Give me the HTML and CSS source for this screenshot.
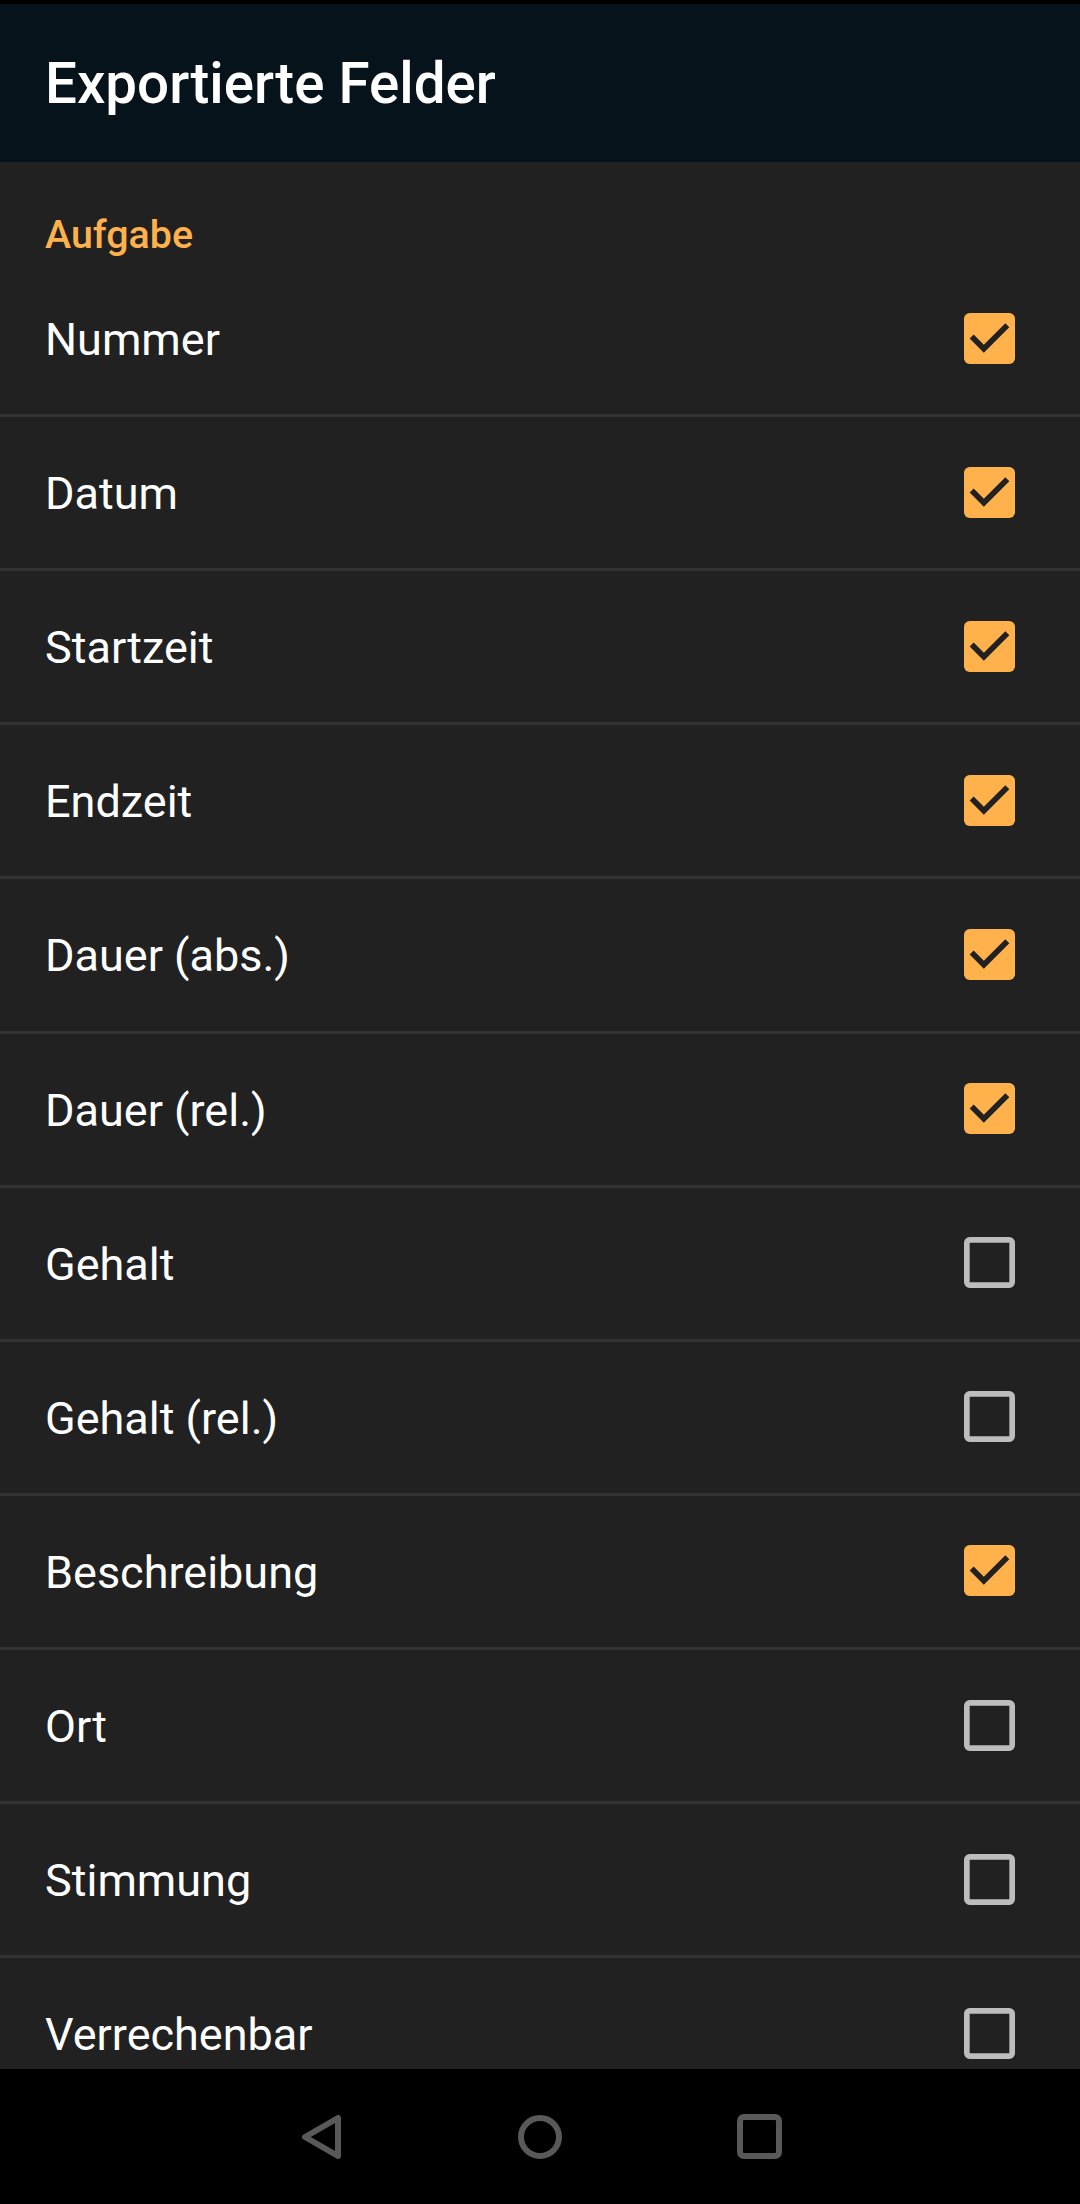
FILE: index.html
```html
<!DOCTYPE html>
<html lang="de">
<head>
<meta charset="utf-8">
<title>Exportierte Felder</title>
<link rel="stylesheet" href="styles.css">
</head>
<body>
<div class="screen">
  <div class="statusbar"></div>
  <header class="appbar"><h1 class="title">Exportierte Felder</h1></header>
  <main class="list">
    <div class="category">Aufgabe</div>

    <div class="row"><span class="label">Nummer</span>
      <svg class="cb" viewBox="0 0 18 18"><rect class="on" x="0" y="0" width="18" height="18" rx="2"/><path class="tick" d="M7 14 l-5-5 1.41-1.41 L7 11.17 l7.59-7.59 L16 5 z"/></svg></div>
    <div class="row"><span class="label">Datum</span>
      <svg class="cb" viewBox="0 0 18 18"><rect class="on" x="0" y="0" width="18" height="18" rx="2"/><path class="tick" d="M7 14 l-5-5 1.41-1.41 L7 11.17 l7.59-7.59 L16 5 z"/></svg></div>
    <div class="row"><span class="label">Startzeit</span>
      <svg class="cb" viewBox="0 0 18 18"><rect class="on" x="0" y="0" width="18" height="18" rx="2"/><path class="tick" d="M7 14 l-5-5 1.41-1.41 L7 11.17 l7.59-7.59 L16 5 z"/></svg></div>
    <div class="row"><span class="label">Endzeit</span>
      <svg class="cb" viewBox="0 0 18 18"><rect class="on" x="0" y="0" width="18" height="18" rx="2"/><path class="tick" d="M7 14 l-5-5 1.41-1.41 L7 11.17 l7.59-7.59 L16 5 z"/></svg></div>
    <div class="row"><span class="label">Dauer (abs.)</span>
      <svg class="cb" viewBox="0 0 18 18"><rect class="on" x="0" y="0" width="18" height="18" rx="2"/><path class="tick" d="M7 14 l-5-5 1.41-1.41 L7 11.17 l7.59-7.59 L16 5 z"/></svg></div>
    <div class="row"><span class="label">Dauer (rel.)</span>
      <svg class="cb" viewBox="0 0 18 18"><rect class="on" x="0" y="0" width="18" height="18" rx="2"/><path class="tick" d="M7 14 l-5-5 1.41-1.41 L7 11.17 l7.59-7.59 L16 5 z"/></svg></div>
    <div class="row"><span class="label">Gehalt</span>
      <svg class="cb" viewBox="0 0 18 18"><rect class="off" x="1" y="1" width="16" height="16" rx="1"/></svg></div>
    <div class="row"><span class="label">Gehalt (rel.)</span>
      <svg class="cb" viewBox="0 0 18 18"><rect class="off" x="1" y="1" width="16" height="16" rx="1"/></svg></div>
    <div class="row"><span class="label">Beschreibung</span>
      <svg class="cb" viewBox="0 0 18 18"><rect class="on" x="0" y="0" width="18" height="18" rx="2"/><path class="tick" d="M7 14 l-5-5 1.41-1.41 L7 11.17 l7.59-7.59 L16 5 z"/></svg></div>
    <div class="row"><span class="label">Ort</span>
      <svg class="cb" viewBox="0 0 18 18"><rect class="off" x="1" y="1" width="16" height="16" rx="1"/></svg></div>
    <div class="row"><span class="label">Stimmung</span>
      <svg class="cb" viewBox="0 0 18 18"><rect class="off" x="1" y="1" width="16" height="16" rx="1"/></svg></div>
    <div class="row"><span class="label">Verrechenbar</span>
      <svg class="cb" viewBox="0 0 18 18"><rect class="off" x="1" y="1" width="16" height="16" rx="1"/></svg></div>
  </main>
  <nav class="navbar">
    <div class="slot">
      <svg class="nav-back" viewBox="0 0 42 46"><path d="M5 23 L38 4 L38 42 Z"/></svg>
    </div>
    <div class="slot">
      <svg class="nav-home" viewBox="0 0 44 44"><circle cx="22" cy="22" r="19"/></svg>
    </div>
    <div class="slot">
      <svg class="nav-recent" viewBox="0 0 45 45"><rect x="3" y="3" width="39" height="39" rx="4"/></svg>
    </div>
  </nav>
</div>
</body>
</html>
```

FILE: styles.css
```css
* { box-sizing: border-box; }

html, body {
  margin: 0;
  padding: 0;
  background: #000;
}

.screen {
  width: 1080px;
  height: 2204px;
  display: flex;
  flex-direction: column;
  background: #212121;
  font-family: Roboto, "Noto Sans", "Liberation Sans", sans-serif;
  overflow: hidden;
}

.statusbar {
  height: 4px;
  flex: none;
  background: #000;
}

.appbar {
  height: 158px;
  flex: none;
  background: #06131a;
  display: flex;
  align-items: center;
  padding: 2px 0 0 45px;
}

.title {
  margin: 0;
  font-size: 56.5px;
  font-weight: 500;
  color: #ffffff;
  line-height: 1;
}

.list {
  flex: 1;
  overflow: hidden;
}

.category {
  height: 101px;
  padding: 53px 0 0 45px;
  font-size: 39.4px;
  line-height: 40px;
  font-weight: 500;
  color: #ffb14c;
}

.row {
  height: 154.12px;
  display: flex;
  align-items: center;
  justify-content: space-between;
  padding: 2px 65px 0 45px;
  border-bottom: 3px solid #323232;
}

.label {
  font-size: 45px;
  line-height: 1;
  color: #ffffff;
}

.cb {
  width: 51px;
  height: 51px;
  flex: none;
  margin-top: -3px;
}

.cb .on { fill: #ffb14c; }
.cb .tick { fill: #212121; }
.cb .off {
  fill: none;
  stroke: #bdbdbd;
  stroke-width: 2;
}

.navbar {
  height: 135px;
  flex: none;
  background: #000;
  display: flex;
  justify-content: center;
  align-items: center;
}

.slot {
  width: 219px;
  display: flex;
  justify-content: center;
  align-items: center;
}

.nav-back { width: 42px; height: 46px; }
.nav-home { width: 44px; height: 44px; }
.nav-recent { width: 45px; height: 45px; }

.navbar path,
.navbar circle,
.navbar rect {
  fill: none;
  stroke: #595959;
  stroke-width: 6;
  stroke-linejoin: round;
}
```
